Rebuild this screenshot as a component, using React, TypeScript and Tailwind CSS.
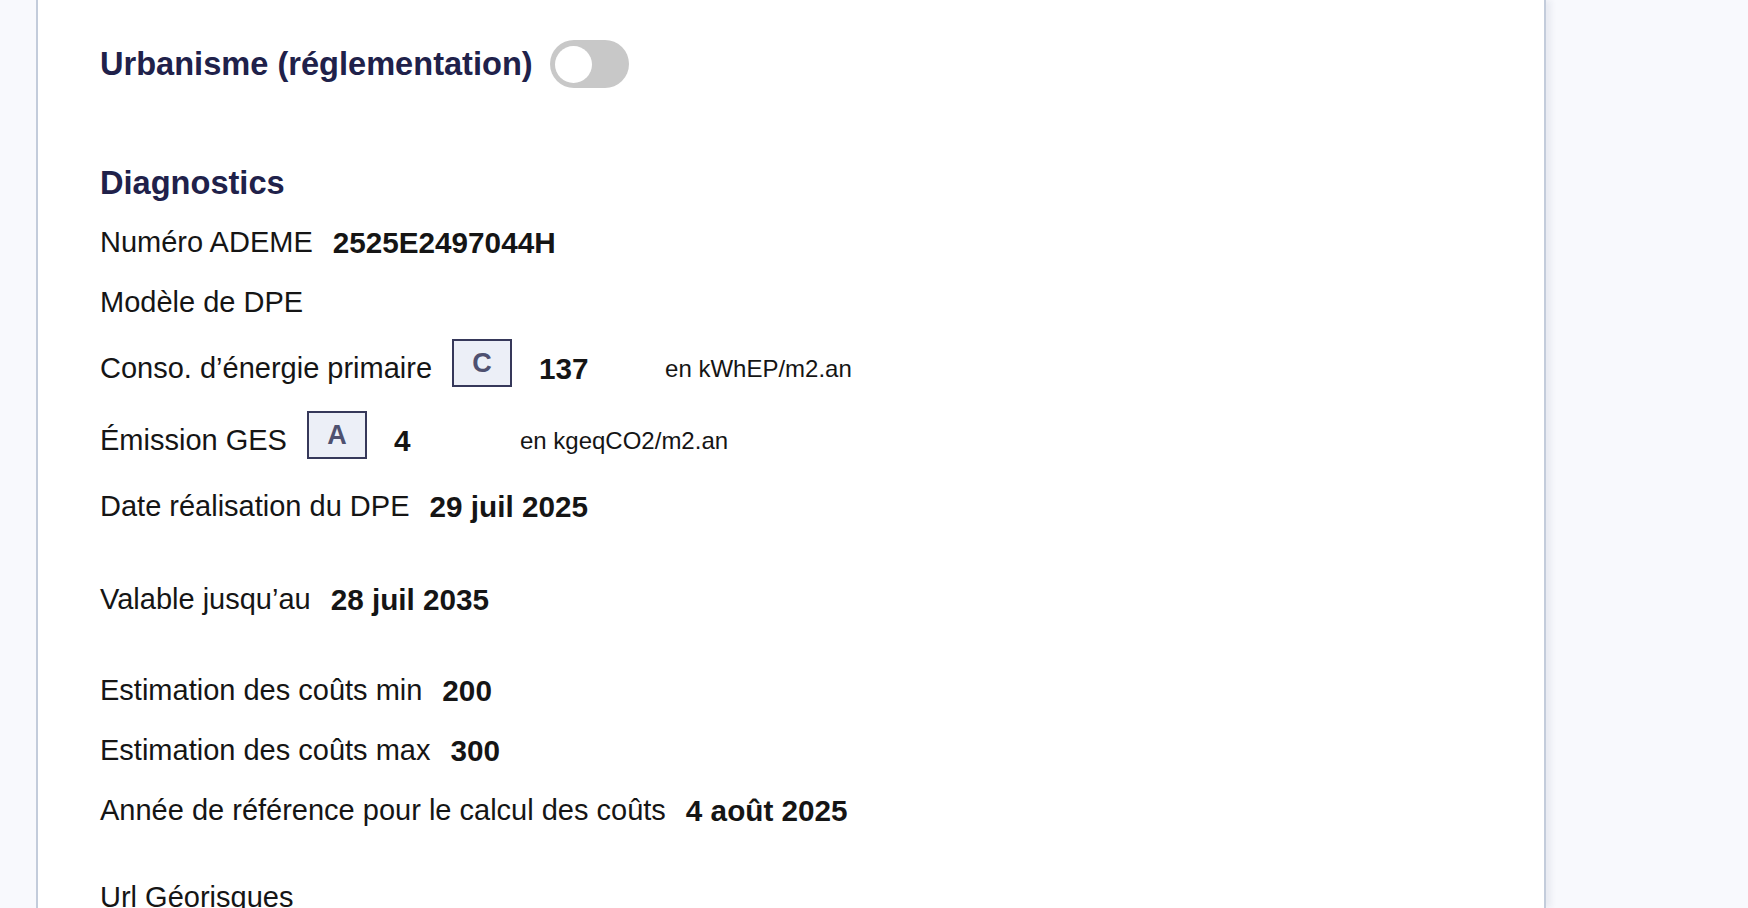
import React from "react";

const font = { fontFamily: '"Liberation Sans", Arial, sans-serif' };

function Row({ label, value, className = "" }: { label: string; value?: string; className?: string }) {
  return (
    <div className={"flex h-10 items-center text-[29px] text-[#151515] " + className}>
      <span>{label}</span>
      {value && <span className="ml-5 text-[29.7px] font-bold">{value}</span>}
    </div>
  );
}

function Grade({ label, letter, value, unit, className = "" }: { label: string; letter: string; value: string; unit: string; className?: string }) {
  return (
    <div className={"flex h-12 items-center text-[29px] text-[#151515] " + className}>
      <span>{label}</span>
      <span className="ml-5 flex h-12 w-[60px] -translate-y-1.5 items-center justify-center border-2 border-[#36385a] bg-[#eceff7] text-[27px] font-bold text-[#4f5170]">
        {letter}
      </span>
      <span className="ml-[27px] w-[126px] text-[29.7px] font-bold">{value}</span>
      <span className="text-[24px]">{unit}</span>
    </div>
  );
}

export default function App() {
  return (
    <div className="h-[908px] w-full overflow-hidden bg-[#f8f9fd] pl-9" style={font}>
      <div className="h-full w-[1510px] border-x-2 border-[#c3ccdb] bg-white pl-[62px] pt-10 shadow-[5px_0_6px_rgba(30,40,80,0.07)]">
        <div className="flex h-12 items-center">
          <h2 className="text-[32.6px] font-bold text-[#20214a]">Urbanisme (réglementation)</h2>
          <div className="ml-[17px] flex h-12 w-[79px] items-center rounded-full bg-[#c8c8c8] pl-[5px]">
            <div className="h-[37px] w-[37px] rounded-full bg-white" />
          </div>
        </div>

        <h2 className="mt-[75px] flex h-10 items-center text-[32.6px] font-bold text-[#20214a]">Diagnostics</h2>

        <Row className="mt-5" label="Numéro ADEME" value="2525E2497044H" />
        <Row className="mt-5" label="Modèle de DPE" />
        <Grade className="mt-[22px]" label="Conso. d’énergie primaire" letter="C" value="137" unit="en kWhEP/m2.an" />
        <Grade className="mt-6" label="Émission GES" letter="A" value="4" unit="en kgeqCO2/m2.an" />
        <Row className="mt-[22px]" label="Date réalisation du DPE" value="29 juil 2025" />
        <Row className="mt-[53px]" label="Valable jusqu’au" value="28 juil 2035" />
        <Row className="mt-[51px]" label="Estimation des coûts min" value="200" />
        <Row className="mt-5" label="Estimation des coûts max" value="300" />
        <Row className="mt-5" label="Année de référence pour le calcul des coûts" value="4 août 2025" />
        <Row className="mt-[47px]" label="Url Géorisques" />
      </div>
    </div>
  );
}
